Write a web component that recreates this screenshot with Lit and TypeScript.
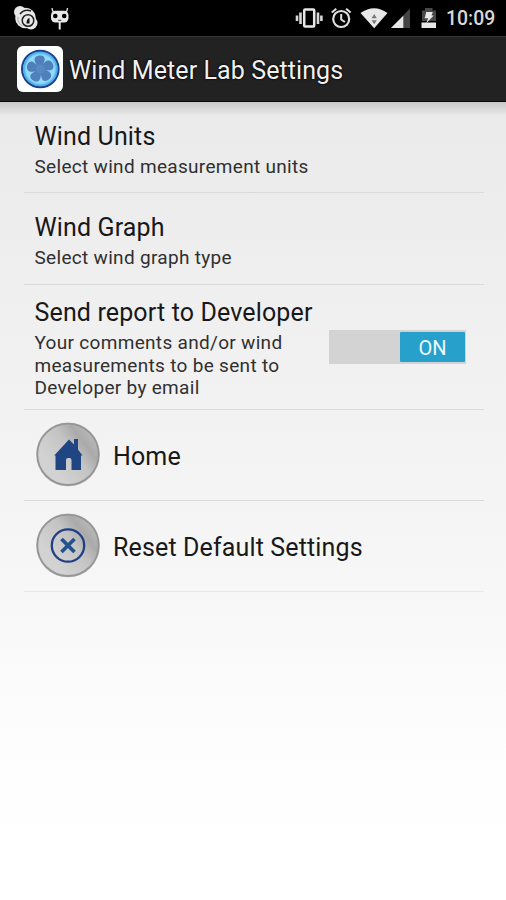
import { LitElement, html, css, svg } from "lit";
import { customElement, property } from "lit/decorators.js";

@customElement("status-bar")
class StatusBar extends LitElement {
  static styles = css`
    :host { display: flex; height: 36px; background: #000; align-items: flex-start; }
    svg { display: block; flex: none; width: 446px; height: 36px; }
    .clock { flex: 1; color: #d8d8d8; font: 500 19.400px/36px Roboto, sans-serif; padding-top: 1px; white-space: nowrap; }
  `;
  render() {
    return html`
      <svg viewBox="0 0 446 36" fill="#e8e8e8">
        <circle cx="20" cy="12" r="6" />
        <circle cx="31" cy="23" r="6.500" />
        <circle cx="25.500" cy="18" r="10.300" />
        <circle cx="28" cy="20.500" r="5.800" fill="none" stroke="#222" stroke-width="1.500" />
        <path d="M20 14q4.500-5.500 11-3" fill="none" stroke="#222" stroke-width="1.600" />
        <path d="M18 17q-1 6 4.500 9" fill="none" stroke="#aaa" stroke-width="1" />
        <path d="M26.500 23.500q0-5 3-5.500v5.500z" fill="#111" />

        <path d="M54 12.500q-2-1.500-2-4.500M65.500 12.500q2-1.500 2-4.500" fill="none" stroke="#e8e8e8" stroke-width="1.300" />
        <rect x="51" y="10.800" width="17.500" height="11.700" rx="4.500" />
        <circle cx="55.300" cy="16" r="2.300" fill="#000" />
        <circle cx="64.200" cy="16" r="2.300" fill="#000" />
        <path d="M58.300 20.300h3" stroke="#222" />
        <path d="M59.700 22v7.500" stroke="#e8e8e8" stroke-width="2" />

        <rect x="304.200" y="9.500" width="10" height="17" rx="1" fill="none" stroke="#e8e8e8" stroke-width="2.500" />
        <path d="M300.500 12.500v11.500M297 15.500v5.500M318 12.500v11.500M321.400 15.500v5.500" stroke="#d8d8d8" stroke-width="2.600" />

        <circle cx="341.200" cy="19" r="8" fill="none" stroke="#e0e0e0" stroke-width="2.200" />
        <path d="M341.200 14v5.500l3.700 2.500M331.800 12.500l4.500-3.800M350.600 12.500l-4.500-3.800" fill="none" stroke="#e0e0e0" stroke-width="2" />

        <path d="M360.500 13q13.500-9.500 27 0L374.200 28.300z" />
        <path d="M374.200 14l-2.600 4.200h5.200zM374.200 24.200l-2.600-4h5.200z" fill="#777" />
        <path d="M391 28l19-19.500v19.500z" fill="#444" />
        <path d="M391 28l12.300-12.300v12.300z" />

        <path d="M422 10.500h3V8h7.500v2.500h3.500V21H422z" fill="#484848" />
        <path d="M421.500 22.500h14.500v5.500h-14.500z" />
        <path d="M426.200 12h6.600l-1.300 3.600h2.300L426 23.500l2.200-5.300h-3.500z" />
      </svg>
      <div class="clock">10:09</div>
    `;
  }
}

@customElement("action-bar")
class ActionBar extends LitElement {
  static styles = css`
    :host { display: flex; align-items: center; height: 66px; box-sizing: border-box; background: #222; border-top: 1px solid #363636; border-bottom: 1px solid #0a0a0a; padding: 0 0 0 17px; }
    .logo { width: 46px; height: 46px; display: block; }
    h1 { margin: 3px 0 0 6px; font: 400 25px/32px Roboto, sans-serif; letter-spacing: .09px; color: #f1f1f1; white-space: nowrap; text-shadow: 0 0 2px #000, 0 0 2px #000; }
  `;
  render() {
    return html`
      <svg class="logo" viewBox="0 0 46 46">
        <defs>
          <radialGradient id="disc"><stop offset="0" stop-color="#7cc6f0" /><stop offset=".75" stop-color="#93dcfb" /><stop offset="1" stop-color="#3b9fe0" /></radialGradient>
        </defs>
        <rect width="46" height="46" rx="6" fill="#fdfefe" />
        <circle cx="23.300" cy="23" r="18.300" fill="url(#disc)" stroke="#223e8c" stroke-width="2" />
        <circle cx="23.300" cy="23" r="16.600" fill="none" stroke="#4bb1ea" stroke-width="1.500" />
        ${[-4, 68, 140, 212, 284].map(
          (a) => svg`<path transform=${`rotate(${a} 23.300 23)`} d="M20.500 21.500C20.500 18.500 18 16.500 18.200 13.200C18.500 10 22 9 25 9.600C28.700 10.400 29 13.500 27.600 16C26.500 18 26 19.500 26 22z" fill="#507fba" />`
        )}
        <circle cx="23.300" cy="23" r="4.500" fill="#5a88c2" />
      </svg>
      <h1>Wind Meter Lab Settings</h1>
    `;
  }
}

@customElement("setting-row")
class SettingRow extends LitElement {
  @property() heading = "";
  @property() summary = "";
  static styles = css`
    :host { display: flex; align-items: center; box-sizing: border-box; height: 91px; margin: 0 22px 0 24px; padding: 0 18px 0 10.500px; border-bottom: 1px solid #dadada; font-family: Roboto, sans-serif; color: #181818; }
    .text { flex: 1; white-space: nowrap; padding-top: 5px; }
    .heading { font-size: 25px; line-height: 32px; letter-spacing: .14px; }
    .summary { font-size: 19px; line-height: 22.800px; color: #303030; letter-spacing: .31px; white-space: pre-line; margin-top: 3px; }
  `;
  render() {
    return html`
      <slot name="icon"></slot>
      <div class="text">
        <div class="heading">${this.heading}</div>
        ${this.summary ? html`<div class="summary">${this.summary}</div>` : ""}
      </div>
      <slot name="widget"></slot>
    `;
  }
}

@customElement("round-icon")
class RoundIcon extends LitElement {
  @property() kind: "home" | "reset" = "home";
  static styles = css`
    :host { display: block; margin-right: 12px; }
    svg { display: block; width: 66px; height: 66px; }
  `;
  render() {
    return html`
      <svg viewBox="0 0 66 66">
        <defs>
          <linearGradient id="face" x1=".9" y1=".2" x2=".25" y2=".7"><stop offset="0" stop-color="#b8b8b8" /><stop offset=".22" stop-color="#aaa" /><stop offset=".5" stop-color="#c4c4c4" /><stop offset="1" stop-color="#d2d2d2" /></linearGradient>
        </defs>
        <circle cx="33" cy="33.500" r="32" fill="#d6d6d6" />
        <circle cx="33" cy="33.300" r="30.700" fill="url(#face)" stroke="#959595" stroke-width="1.800" />
        ${this.kind === "home"
          ? svg`<path d="M19.200 34.500L34 18.500l5 5V18h4v10.500l4.500 6H46V49H36.500V39q0-2-2-2h-1.500q-2 0-2 2v10H20.500V34.500z" fill="#1f4683" />`
          : svg`<circle cx="33" cy="33.500" r="16.200" fill="none" stroke="#213f85" stroke-width="2.300" /><path d="M27.800 28.300l10.400 10.400M38.200 28.300l-10.400 10.400" stroke="#23508f" stroke-width="3.700" stroke-linecap="square" />`}
      </svg>
    `;
  }
}

@customElement("toggle-switch")
class ToggleSwitch extends LitElement {
  static styles = css`
    :host { display: flex; box-sizing: border-box; width: 137px; height: 34px; padding: 2px 1px 2px 71px; background: #d3d3d3; margin-top: 1px; }
    .thumb { flex: 1; background: #27a0cc; color: #eefaff; font: 400 20px/32px Roboto, sans-serif; text-align: center; border-radius: 1px; }
  `;
  render() {
    return html`<div class="thumb">ON</div>`;
  }
}

@customElement("app-root")
class AppRoot extends LitElement {
  static styles = css`
    :host { display: block; height: 900px; overflow: hidden; background: linear-gradient(#eaeaea 102px, #efefef 285px, #f5f5f5 530px, #fdfdfd 740px, #fff 850px); }
    main { background: linear-gradient(#c8c8c8, #dedede00 14px); }
    .tall { height: 92px; }
    .report { height: 125px; padding-bottom: 2px; }
    .action { padding-left: 11px; padding-bottom: 2px; }
    .last { border-bottom-color: #e9e9e9; }
  `;
  render() {
    return html`
      <status-bar></status-bar>
      <action-bar></action-bar>
      <main>
        <setting-row heading="Wind Units" summary="Select wind measurement units"></setting-row>
        <setting-row class="tall" heading="Wind Graph" summary="Select wind graph type"></setting-row>
        <setting-row class="report" heading="Send report to Developer"
          .summary=${"Your comments and/or wind\nmeasurements to be sent to\nDeveloper by email"}>
          <toggle-switch slot="widget"></toggle-switch>
        </setting-row>
        <setting-row class="action" heading="Home"><round-icon slot="icon" kind="home"></round-icon></setting-row>
        <setting-row class="action last" heading="Reset Default Settings"><round-icon slot="icon" kind="reset"></round-icon></setting-row>
      </main>
    `;
  }
}
